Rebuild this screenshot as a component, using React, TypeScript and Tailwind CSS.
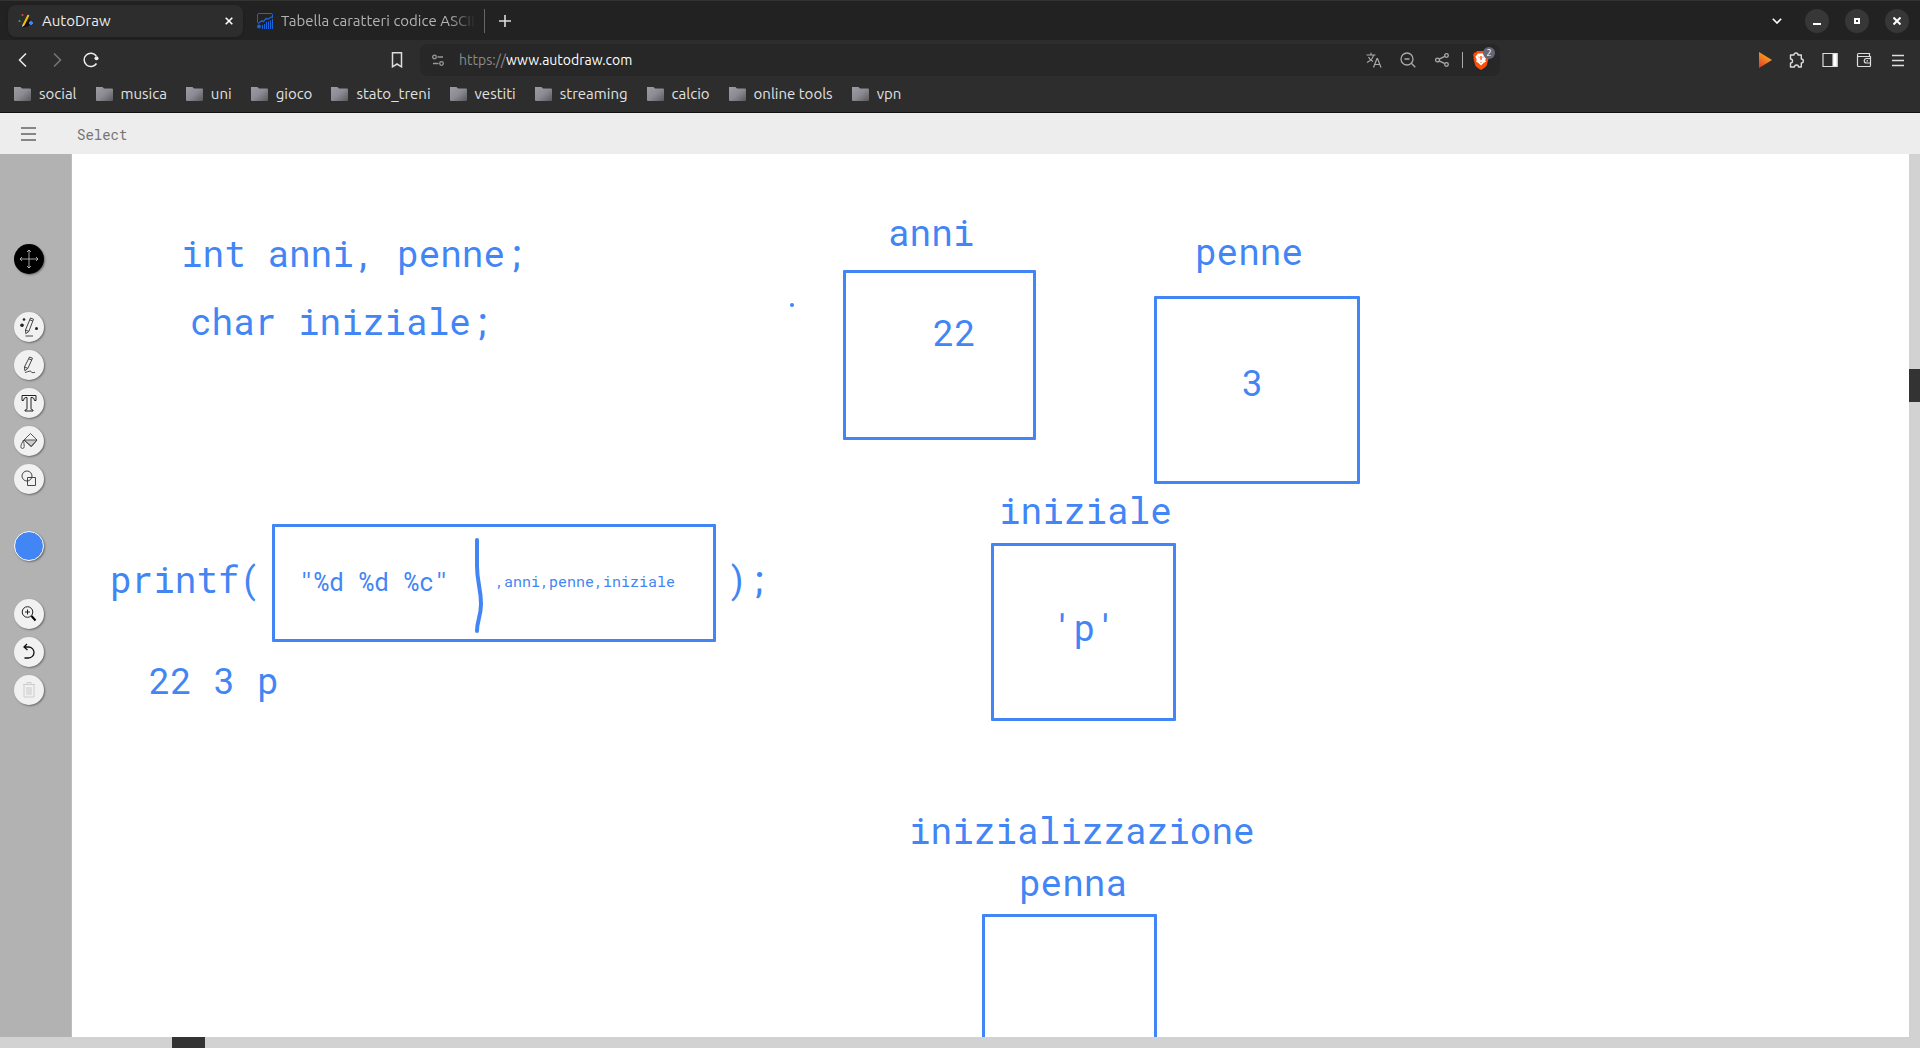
import type { ButtonHTMLAttributes, ReactNode } from "react";

const mono = "font-['Roboto_Mono','Liberation_Mono',monospace]";

function Btn({ label, className = "", children, ...rest }: { label: string; children?: ReactNode } & ButtonHTMLAttributes<HTMLButtonElement>) {
  return (
    <button type="button" aria-label={label} className={`flex shrink-0 items-center justify-center ${className}`} {...rest}>
      {children}
    </button>
  );
}

function AutoDrawIcon() {
  return (
    <svg viewBox="0 0 16 16" className="size-4 shrink-0" aria-hidden="true">
      <path d="M4.5 14.5 12 5l-1 8Z" fill="#111" />
      <path d="M10.500 2 5.500 12" stroke="#fbbc04" strokeWidth="1.900" />
      <path d="m4.700 11.300-.6 2.700 2.200-1.800Z" fill="#eee" />
      <circle cx="4.500" cy="2" r="1.100" fill="#ea4335" />
      <circle cx="1.500" cy="8" r="1.100" fill="#34a853" />
      <path d="M13 8v4M11 10h4" stroke="#4285f4" strokeWidth="1.800" />
    </svg>
  );
}

function ChartIcon() {
  return (
    <svg viewBox="0 0 16 16" className="size-4 shrink-0" fill="none" stroke="#1a63d8" aria-hidden="true">
      <path d="M.5 9.500V2Q.5.500 2 .500h12q1.500 0 1.500 1.500v3" />
      <path d="M1 10.500 4.500 8l2 .5L9 5.500l2 .5L15.500 3.500" strokeWidth="1.300" />
      <path d="M5.500 16v-4M7.500 16v-5M9.500 16V9M11.500 16V8.500M13.500 16V7.500M15.500 16V6" />
      <circle cx="2" cy="13.500" r="2" fill="#1a63d8" stroke="none" />
    </svg>
  );
}

function TabStrip() {
  return (
    <div className="flex h-10 items-center border-t border-[#333] bg-[#222] pr-[11px] text-[15px] leading-5">
      <div role="tablist" className="flex items-center">
        <div className="ml-2 flex h-8 w-[235px] items-center rounded-lg bg-[#2d2d2d] pr-[6px] pl-[10px] shadow">
          <button type="button" role="tab" aria-selected="true" className="flex grow items-center gap-2 text-[#ececec]">
            <AutoDrawIcon />
            AutoDraw
          </button>
          <Btn label="Close tab" className="size-4 text-white">
            <svg viewBox="0 0 8 8" className="size-2" stroke="currentColor" strokeWidth="1.600"><path d="m.7.7 6.600 6.600M7.300.7.7 7.300" /></svg>
          </Btn>
        </div>
        <button type="button" role="tab" aria-selected="false" className="flex h-6 w-[242px] items-center gap-2 border-r border-[#666] pr-2 pl-[14px] text-[#b4b4b4]">
          <ChartIcon />
          <span className="w-[195px] overflow-hidden text-left whitespace-nowrap [mask-image:linear-gradient(to_right,#000_86%,transparent)]">
            Tabella caratteri codice ASCII
          </span>
        </button>
      </div>
      <Btn label="New tab" className="ml-[14px] size-3 text-[#ddd]">
        <svg viewBox="0 0 12 12" className="size-3" stroke="currentColor" strokeWidth="1.600"><path d="M6 0v12M0 6h12" /></svg>
      </Btn>
      <div className="ml-auto flex items-center gap-4 text-white">
        <Btn label="Search tabs" className="size-6">
          <svg viewBox="0 0 10 6" className="h-[6px] w-[10px]" fill="none" stroke="currentColor" strokeWidth="1.600"><path d="m.8.8 4.200 4.200L9.200.8" /></svg>
        </Btn>
        <Btn label="Minimize" className="size-6 rounded-full bg-[#373737]">
          <svg viewBox="0 0 8 8" className="size-2" fill="currentColor"><path d="M0 6h8v2H0z" /></svg>
        </Btn>
        <Btn label="Maximize" className="size-6 rounded-full bg-[#373737]">
          <svg viewBox="0 0 6 6" className="size-[6px]" fill="none" stroke="currentColor" strokeWidth="2"><path d="M1 1h4v4H1z" /></svg>
        </Btn>
        <Btn label="Close" className="size-6 rounded-full bg-[#373737]">
          <svg viewBox="0 0 8 8" className="size-2" stroke="currentColor" strokeWidth="2"><path d="m.5.5 7 7M7.500.5l-7 7" /></svg>
        </Btn>
      </div>
    </div>
  );
}

function Toolbar() {
  return (
    <div className="flex h-10 items-center bg-[#2d2d2d] pr-[14px] text-[#ddd]">
      <div className="flex w-[388px] items-center pl-[15px]">
        <Btn label="Back" className="size-4">
          <svg viewBox="0 0 16 16" className="size-4" fill="none" stroke="#eee" strokeWidth="1.500"><path d="M11 1.500 4.500 8l6.500 6.500" /></svg>
        </Btn>
        <Btn label="Forward" className="ml-[18px] size-4" disabled>
          <svg viewBox="0 0 16 16" className="size-4" fill="none" stroke="#777" strokeWidth="1.500"><path d="M5 1.500 11.500 8 5 14.500" /></svg>
        </Btn>
        <Btn label="Reload" className="ml-[18px] size-4">
          <svg viewBox="0 0 16 16" className="size-4" fill="none" stroke="#eee" strokeWidth="1.500"><path d="M13.500 11.500A6.700 6.700 0 1 1 13.300 4" /><circle cx="13.500" cy="6.200" r="2" fill="#eee" stroke="none" /></svg>
        </Btn>
      </div>
      <Btn label="Bookmark this page" className="ml-px size-4">
        <svg viewBox="0 0 16 16" className="size-4" fill="none" stroke="#ddd" strokeWidth="1.500"><path d="M3.500.8h9v14L8 12l-4.500 2.800Z" /></svg>
      </Btn>
      <div className="ml-[15px] flex h-8 w-[1080px] items-center rounded-lg bg-[#272727] pr-[11px] pl-3">
        <Btn label="View site information" className="size-3">
          <svg viewBox="0 0 12 12" className="size-3" fill="none" stroke="#999" strokeWidth="1.300"><circle cx="2.500" cy="3" r="1.800" /><path d="M5.500 3H11M1 9.500h5.500" /><circle cx="9.500" cy="9.500" r="1.800" /></svg>
        </Btn>
        <div className="relative ml-[15px] min-w-0 grow">
          <span aria-hidden="true" className="pointer-events-none text-[#8b8b8b]">https://<span className="text-white">www.autodraw.com</span></span>
          <input aria-label="Address" className="absolute inset-0 w-full bg-transparent text-transparent outline-none" />
        </div>
        <div className="flex items-center gap-[18px] text-[#aaa]">
          <Btn label="Translate" className="size-4">
            <svg viewBox="0 0 16 16" className="size-4" fill="none" stroke="currentColor" strokeWidth="1.200"><path d="M.5 3h9M5 .8V3M7.500 3C7 6.500 4 9 1 10.500M2.500 5C3.500 7 5 8.500 7 9.500" /><path d="m7.500 15.500 3.500-9h.5l3.500 9M8.700 12.500h5" /></svg>
          </Btn>
          <Btn label="Zoom" className="size-4">
            <svg viewBox="0 0 16 16" className="size-4" fill="none" stroke="currentColor" strokeWidth="1.300"><circle cx="7" cy="7" r="6" /><path d="M4.500 7h5M11.300 11.300l4 4" /></svg>
          </Btn>
          <Btn label="Share" className="size-4">
            <svg viewBox="0 0 16 16" className="size-4" fill="none" stroke="currentColor" strokeWidth="1.300"><circle cx="3.500" cy="8" r="1.900" /><circle cx="12.500" cy="3.500" r="1.800" /><circle cx="12.500" cy="12.500" r="1.800" /><path d="m5.200 7.100 5.600-2.700M5.200 8.900l5.600 2.700" /></svg>
          </Btn>
        </div>
        <div className="ml-3 h-4 w-px bg-[#aaa]" />
        <Btn label="Brave Shields" className="relative ml-[10px] h-5 w-4">
          <svg viewBox="0 0 16 20" className="h-5 w-4"><path d="M4 1h8l1.500 1.700 1.500-.2.800 3-.7 1.800.5 1-1.800 7c-.5 1.500-4.500 4-5.800 4.700-1.300-.7-5.300-3.200-5.800-4.700L.4 8.300l.5-1L.2 5.500l.8-3 1.500.2Z" fill="#fb4f0a" /><path d="M5 3.500h6l2.500 3-1.300 3.500.8 1.500-2.500 1.500L8 15.500 5.500 13 3 11.500l.8-1.500L2.500 6.500Z" fill="#fff" /><path d="m4.500 6.500 2 .5v1ZM11.500 6.500l-2 .5v1ZM7.300 6h1.400v3.500L8 10.500l-.7-1ZM6 11.300l2 .9 2-.9L8 13Z" fill="#fb4f0a" /></svg>
          <span className="absolute -top-[3px] left-[10px] flex size-3 items-center justify-center rounded-full bg-[#63677a] text-[9px] leading-none text-white">2</span>
        </Btn>
      </div>
      <div className="ml-auto flex items-center gap-[18px]">
        <Btn label="Player extension" className="-mr-[2px] h-4 w-[14px]">
          <svg viewBox="1 0 14 16" className="h-4 w-[14px]"><defs><linearGradient id="play" x1="0" x2=".6" y1="1" y2="0"><stop stopColor="#e8342c" /><stop offset="1" stopColor="#f9b217" /></linearGradient></defs><path d="M2 0v16l13-8Z" fill="url(#play)" /></svg>
        </Btn>
        <Btn label="Extensions" className="size-4">
          <svg viewBox="0 0 16 16" className="size-4" fill="none" stroke="currentColor" strokeWidth="1.400" strokeLinejoin="round"><path d="M2.500 3h3.500a2 2 0 1 1 4 0h3.300v4a2 2 0 1 1 0 4v4H10.500a2 2 0 0 0-4 0h-4v-4a2 2 0 0 0 0-4Z" /></svg>
        </Btn>
        <Btn label="Side panel" className="size-4">
          <svg viewBox="0 0 16 16" className="size-4" fill="none" stroke="currentColor" strokeWidth="1.200"><path d="M1 1.500h14v13H1z" /><path d="M11 1.500h4v13h-4z" fill="#fff" /></svg>
        </Btn>
        <Btn label="Wallet" className="size-4">
          <svg viewBox="0 0 16 16" className="size-4" fill="none" stroke="currentColor" strokeWidth="1.200"><path d="M1.500 3.500v10q0 1 1 1h11q1 0 1-1v-9h-12q-1 0-1-1.500T2.500 1.500h11v3" /><path d="M14.500 6.500h-4a2 2 0 0 0 0 4.500h4M10.500 8.800h1.500" /></svg>
        </Btn>
        <Btn label="Menu" className="size-4">
          <svg viewBox="0 0 16 16" className="size-4" stroke="currentColor" strokeWidth="1.400"><path d="M2 3.500h12M2 8.500h12M2 13.500h12" /></svg>
        </Btn>
      </div>
    </div>
  );
}

const bookmarks = ["social", "musica", "uni", "gioco", "stato_treni", "vestiti", "streaming", "calcio", "online tools", "vpn"];

function Bookmarks() {
  return (
    <nav aria-label="Bookmarks" className="flex h-[33px] items-start gap-[18px] border-b border-[#111] bg-[#2d2d2d] pt-1 pl-[13px] text-[15px] leading-5">
      {bookmarks.map((name) => (
        <a key={name} href="#" className="flex items-center gap-2 whitespace-nowrap text-[#e2e2e2]">
          <svg viewBox="0 0 18 14" className="h-[14px] w-[18px]" aria-hidden="true">
            <defs><linearGradient id="folder" x1="0" x2="1" y1="0" y2="1"><stop stopColor="#9d9ca4" /><stop offset=".5" stopColor="#8b8b93" /><stop offset="1" stopColor="#5a5a5c" /></linearGradient></defs>
            <path d="M1 0h6.500L9 1.500h8q1 0 1 1V13q0 1-1 1H2q-1 0-1-1Z" fill="url(#folder)" />
          </svg>
          {name}
        </a>
      ))}
    </nav>
  );
}

const tool = "size-[30px] rounded-full bg-[#f1f1f1] shadow-[1px_1px_2px_rgba(0,0,0,0.4)]";

function Sidebar() {
  return (
    <aside aria-label="Tools" className="flex w-[72px] shrink-0 flex-col items-center border-r border-[#bdbdbd] bg-[#b2b2b2] pt-[90px] pr-[13px]">
      <Btn label="Select" className="size-[30px] rounded-full bg-black shadow-[1px_1px_2px_rgba(0,0,0,0.4)]">
        <svg viewBox="0 0 20 20" className="size-5" fill="none" stroke="#ccc" strokeWidth=".8"><path d="M10 1v18M1 10h18M8 3l2-2 2 2M8 17l2 2 2-2M3 8l-2 2 2 2M17 8l2 2-2 2" /></svg>
      </Btn>
      <div className="mt-[38px] flex flex-col gap-2">
        <Btn label="AutoDraw" className={tool}>
          <svg viewBox="0 0 20 20" className="size-5" fill="none" stroke="#333" strokeWidth=".9"><path d="m11.500 1 3 1.200-4.700 12.300-3 2.200-.3-3.800Zm-5 11.900 3.300 1.500M10.800 2.800l3 1.200M6.500 19H14" /><g fill="#222" stroke="none"><circle cx="5" cy="2.500" r="1.300" /><circle cx="3" cy="8.200" r="1.800" /><circle cx="17.500" cy="11.500" r="1.500" /></g></svg>
        </Btn>
        <Btn label="Draw" className={tool}>
          <svg viewBox="0 0 20 20" className="size-5" fill="none" stroke="#333" strokeWidth=".9"><path d="m10.500 2 3 1.200-4.700 10.300-3 2.200-.3-3.800Zm-5 9.900 3.300 1.500M9.800 3.800l3 1.200M6 17.500c3.500-1 5.500-2 6-1s1 1.500 4 .8" /></svg>
        </Btn>
        <Btn label="Type" className={tool}>
          <svg viewBox="0 0 20 20" className="size-5" fill="none" stroke="#222" strokeWidth="1"><path d="M3 2.500h14v5h-1.500q-.2-3-2.500-3h-1v11.500q0 1 2 1v1H6v-1q2 0 2-1V4.500H7q-2.300 0-2.500 3H3Z" /></svg>
        </Btn>
        <Btn label="Fill" className={tool}>
          <svg viewBox="0 0 20 20" className="size-5" fill="none" stroke="#444" strokeWidth=".9"><path d="M5 9h13l-5.500 6.500Z" fill="#ccc" /><path d="m5 9 6.500-6.500L18 9l-6 6.500ZM4.500 9Q1.800 14 1.800 15.500q0 2 1.700 2t1.700-2Q5.200 13 4.500 9Z" /></svg>
        </Btn>
        <Btn label="Shape" className={tool}>
          <svg viewBox="0 0 20 20" className="size-5" fill="none" stroke="#333" strokeWidth=".9"><circle cx="8" cy="7" r="5" /><path d="M8.500 8.500h8v8h-8z" /></svg>
        </Btn>
      </div>
      <Btn label="Color" className="mt-[37px] size-[30px] rounded-full border border-white bg-[#4285f4] shadow-[1px_1px_2px_rgba(0,0,0,0.4)]" />
      <div className="mt-[38px] flex flex-col gap-2">
        <Btn label="Zoom" className={tool}>
          <svg viewBox="0 0 20 20" className="size-5" fill="none" stroke="#222"><circle cx="8.500" cy="8" r="5.300" /><path d="M8.500 5.500v5M6 8h5" /><path d="m12.500 12 4 4.500" stroke="#000" strokeWidth="2" /></svg>
        </Btn>
        <Btn label="Undo" className={tool}>
          <svg viewBox="0 0 20 20" className="size-5" fill="none" stroke="#111" strokeWidth="1.300"><path d="M8 2 5 5l3.500 3M5 5h4.500a5.500 5.500 0 0 1 0 11H5.500" /></svg>
        </Btn>
        <Btn label="Delete" className={tool} disabled>
          <svg viewBox="0 0 20 20" className="size-5" fill="none" stroke="#ccc" strokeWidth="1"><path d="M4 4.500h12M5 5v12h10V5M8 4.500v-2h4v2" /><path d="M7.500 7.500h5v7h-5z" fill="#ddd" stroke="#ddd" /></svg>
        </Btn>
      </div>
    </aside>
  );
}

const box = "absolute rounded-[1px] border-3 border-[#4285f4]";
const text = "absolute text-4xl leading-none whitespace-pre";

function Canvas() {
  return (
    <main aria-label="Drawing" className={`relative min-w-0 grow overflow-hidden bg-white text-[#4285f4] ${mono}`}>
      <p className={`${text} top-[81px] left-[109px]`}>int anni, penne;</p>
      <p className={`${text} top-[149px] left-[118px]`}>char iniziale;</p>
      <p className={`${text} top-[407px] left-[38px]`}>printf(</p>
      <div className={`${box} top-[370px] left-[200px] h-[118px] w-[444px]`} />
      <p className="absolute top-[415px] left-[227px] text-[25px] leading-none whitespace-pre">"%d %d %c"</p>
      <svg viewBox="0 0 14 98" className="absolute top-[383px] left-[398px] h-[98px] w-[14px]" fill="none" stroke="currentColor" strokeWidth="4" strokeLinecap="round" aria-hidden="true">
        <path d="M7 3v26c0 17 4 22 4 38C11 80 7 83 7 94" />
      </svg>
      <p className="absolute top-[420px] left-[423px] text-[15px] leading-none whitespace-pre">,anni,penne,iniziale</p>
      <p className={`${text} top-[407px] left-[654px]`}>);</p>
      <p className={`${text} top-[508px] left-[77px]`}>22 3 p</p>
      <span className="absolute top-[149px] left-[718px] size-1 rounded-full bg-[#4285f4]" />

      <p className={`${text} top-[60px] left-[816px]`}>anni</p>
      <div className={`${box} top-[116px] left-[771px] h-[170px] w-[193px]`} />
      <p className={`${text} top-[160px] left-[861px]`}>22</p>

      <p className={`${text} top-[79px] left-[1123px]`}>penne</p>
      <div className={`${box} top-[142px] left-[1082px] h-[188px] w-[206px]`} />
      <p className={`${text} top-[210px] left-[1170px]`}>3</p>

      <p className={`${text} top-[338px] left-[927px]`}>iniziale</p>
      <div className={`${box} top-[389px] left-[919px] h-[178px] w-[185px]`} />
      <p className={`${text} top-[455px] left-[980px]`}>'p'</p>

      <p className={`${text} top-[658px] left-[837px]`}>inizializzazione</p>
      <p className={`${text} top-[710px] left-[947px]`}>penna</p>
      <div className={`${box} top-[760px] left-[910px] h-[200px] w-[175px]`} />
    </main>
  );
}

export default function App() {
  return (
    <div className="flex h-screen flex-col overflow-hidden font-['Ubuntu','Noto_Sans',sans-serif] text-sm">
      <TabStrip />
      <Toolbar />
      <Bookmarks />
      <header className="flex h-[41px] shrink-0 items-center bg-[#ededed] pl-[21px] text-[#757575]">
        <Btn label="Menu" className="h-4 w-[15px]">
          <svg viewBox="0 0 15 14" className="h-[14px] w-[15px]" stroke="#858585" strokeWidth="2"><path d="M0 1h15M0 7h15M0 13h15" /></svg>
        </Btn>
        <h1 className={`ml-[41px] pt-[2px] text-sm ${mono}`}>Select</h1>
      </header>
      <div className="flex min-h-0 grow">
        <Sidebar />
        <Canvas />
        <div className="w-[11px] shrink-0 bg-[#d2d2d2] pt-[215px]">
          <div className="h-[33px] bg-[#333]" />
        </div>
      </div>
      <div className="h-[11px] shrink-0 bg-[#d2d2d2] pl-[172px]">
        <div className="h-full w-[33px] bg-[#333]" />
      </div>
    </div>
  );
}
